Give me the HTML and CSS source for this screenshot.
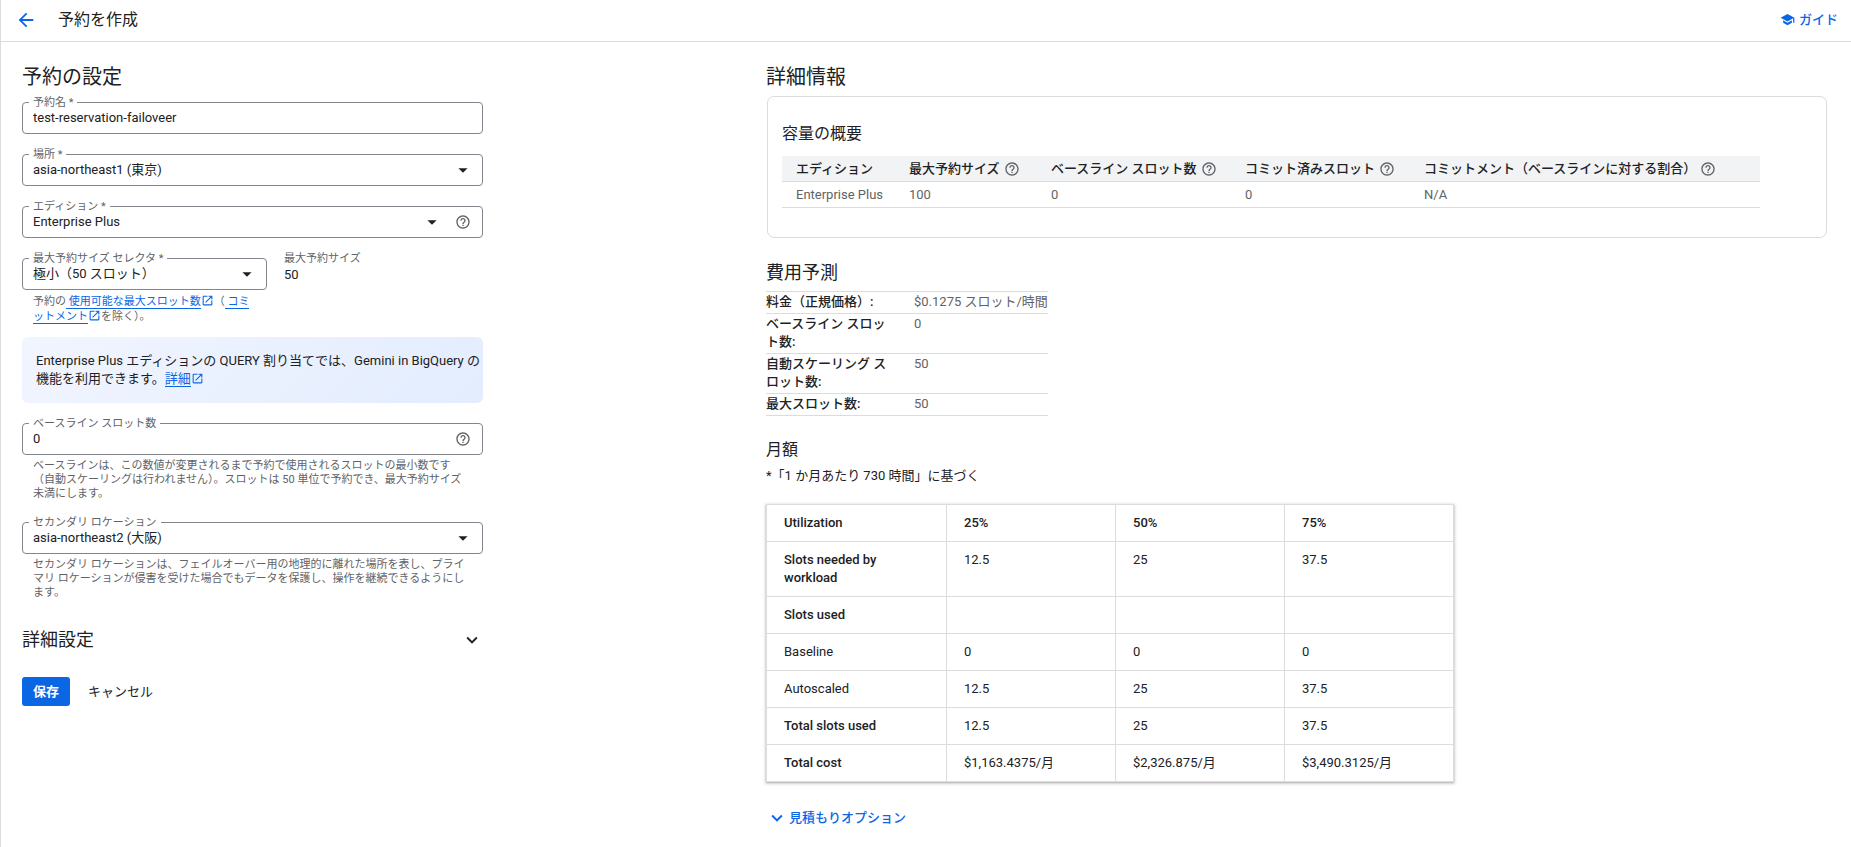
FILE: index.html
```
<!DOCTYPE html>
<html lang="ja">
<head>
    <meta charset="UTF-8">
    <meta name="viewport" content="width=device-width, initial-scale=1.0">
    <title>予約を作成</title>
    <link rel="stylesheet" href="styles.css">
</head>
<body>
    <!-- Shared icons -->
    <svg class="sprite" aria-hidden="true">
        <symbol id="icon-help" viewBox="0 0 24 24">
            <path d="M11 18h2v-2h-2v2zm1-16C6.48 2 2 6.48 2 12s4.48 10 10 10 10-4.48 10-10S17.52 2 12 2zm0 18c-4.41 0-8-3.59-8-8s3.59-8 8-8 8 3.59 8 8-3.59 8-8 8zm0-14c-2.21 0-4 1.79-4 4h2c0-1.1.9-2 2-2s2 .9 2 2c0 2-3 1.75-3 5h2c0-2.25 3-2.5 3-5 0-2.21-1.79-4-4-4z"/>
        </symbol>
        <symbol id="icon-open" viewBox="0 0 24 24">
            <path d="M19 19H5V5h7V3H5c-1.11 0-2 .9-2 2v14c0 1.1.89 2 2 2h14c1.1 0 2-.9 2-2v-7h-2v7zM14 3v2h3.59l-9.83 9.83 1.41 1.41L19 6.41V10h2V3h-7z"/>
        </symbol>
        <symbol id="icon-chevron" viewBox="0 0 24 24">
            <path d="M7.41 8.59 12 13.17l4.59-4.58L18 10l-6 6-6-6z"/>
        </symbol>
        <symbol id="icon-drop" viewBox="0 0 24 24">
            <path d="m7 10 5 5 5-5z"/>
        </symbol>
    </svg>

    <header>
        <button class="back" type="button" aria-label="戻る">
            <svg viewBox="0 0 24 24"><path d="M20 11H7.83l5.59-5.59L12 4l-8 8 8 8 1.41-1.41L7.83 13H20v-2z"/></svg>
        </button>
        <h1>予約を作成</h1>
        <a href="#" class="guide">
            <svg viewBox="0 0 24 24"><path d="M5 13.18v4L12 21l7-3.82v-4L12 17l-7-3.82zM12 3 1 9l11 6 9-4.91V17h2V9L12 3z"/></svg>
            ガイド
        </a>
    </header>

    <main>
        <form class="settings">
            <h2>予約の設定</h2>

            <div class="field">
                <label for="name">予約名 *</label>
                <input id="name" type="text" value="test-reservation-failoveer">
            </div>

            <div class="field">
                <label for="region">場所 *</label>
                <select id="region"><option>asia-northeast1 (東京)</option></select>
                <svg class="drop"><use href="#icon-drop"/></svg>
            </div>

            <div class="field">
                <label for="edition">エディション *</label>
                <select id="edition"><option>Enterprise Plus</option></select>
                <svg class="drop"><use href="#icon-drop"/></svg>
                <svg class="help"><use href="#icon-help"/></svg>
            </div>

            <div class="size-row">
                <div class="size-select">
                    <div class="field">
                        <label for="size">最大予約サイズ セレクタ *</label>
                        <select id="size"><option>極小（50 スロット）</option></select>
                        <svg class="drop"><use href="#icon-drop"/></svg>
                    </div>
                    <p class="hint">予約の<a href="#"> 使用可能な最大スロット数</a><svg class="open"><use href="#icon-open"/></svg>（<a href="#"> コミ<br>ットメント</a><svg class="open"><use href="#icon-open"/></svg>を除く）。</p>
                </div>
                <div class="size-value">
                    <span class="caption">最大予約サイズ</span>
                    <span>50</span>
                </div>
            </div>

            <p class="notice">Enterprise Plus エディションの QUERY 割り当てでは、Gemini in BigQuery の<br>機能を利用できます。<a href="#">詳細</a><svg class="open"><use href="#icon-open"/></svg></p>

            <div class="field">
                <label for="baseline">ベースライン スロット数</label>
                <input id="baseline" type="text" value="0">
                <svg class="help"><use href="#icon-help"/></svg>
            </div>
            <p class="hint">ベースラインは、この数値が変更されるまで予約で使用されるスロットの最小数です<br>（自動スケーリングは行われません）。スロットは 50 単位で予約でき、最大予約サイズ<br>未満にします。</p>

            <div class="field secondary">
                <label for="secondary">セカンダリ ロケーション</label>
                <select id="secondary"><option>asia-northeast2 (大阪)</option></select>
                <svg class="drop"><use href="#icon-drop"/></svg>
            </div>
            <p class="hint">セカンダリ ロケーションは、フェイルオーバー用の地理的に離れた場所を表し、プライ<br>マリ ロケーションが侵害を受けた場合でもデータを保護し、操作を継続できるようにし<br>ます。</p>

            <button class="advanced" type="button">
                詳細設定
                <svg><use href="#icon-chevron"/></svg>
            </button>

            <div class="actions">
                <button class="save" type="submit">保存</button>
                <button class="cancel" type="button">キャンセル</button>
            </div>
        </form>

        <section class="details">
            <h2>詳細情報</h2>

            <div class="card">
                <h3>容量の概要</h3>
                <table class="capacity">
                    <thead>
                        <tr>
                            <th class="col-edition">エディション</th>
                            <th class="col-max"><span>最大予約サイズ<svg class="help"><use href="#icon-help"/></svg></span></th>
                            <th class="col-baseline"><span>ベースライン スロット数<svg class="help"><use href="#icon-help"/></svg></span></th>
                            <th class="col-committed"><span>コミット済みスロット<svg class="help"><use href="#icon-help"/></svg></span></th>
                            <th><span>コミットメント（ベースラインに対する割合）<svg class="help"><use href="#icon-help"/></svg></span></th>
                        </tr>
                    </thead>
                    <tbody>
                        <tr>
                            <td>Enterprise Plus</td>
                            <td>100</td>
                            <td>0</td>
                            <td>0</td>
                            <td>N/A</td>
                        </tr>
                    </tbody>
                </table>
            </div>

            <h3 class="cost-title">費用予測</h3>
            <table class="cost">
                <tr><th>料金（正規価格）:</th><td>$0.1275 スロット/時間</td></tr>
                <tr><th>ベースライン スロッ<br>ト数:</th><td>0</td></tr>
                <tr><th>自動スケーリング ス<br>ロット数:</th><td>50</td></tr>
                <tr><th>最大スロット数:</th><td>50</td></tr>
            </table>

            <h3 class="monthly-title">月額</h3>
            <p class="note">*「1 か月あたり 730 時間」に基づく</p>

            <table class="monthly">
                <thead>
                    <tr><th>Utilization</th><th>25%</th><th>50%</th><th>75%</th></tr>
                </thead>
                <tbody>
                    <tr><th>Slots needed by workload</th><td>12.5</td><td>25</td><td>37.5</td></tr>
                    <tr><th>Slots used</th><td></td><td></td><td></td></tr>
                    <tr><td>Baseline</td><td>0</td><td>0</td><td>0</td></tr>
                    <tr><td>Autoscaled</td><td>12.5</td><td>25</td><td>37.5</td></tr>
                    <tr><th>Total slots used</th><td>12.5</td><td>25</td><td>37.5</td></tr>
                    <tr><th>Total cost</th><td>$1,163.4375/月</td><td>$2,326.875/月</td><td>$3,490.3125/月</td></tr>
                </tbody>
            </table>

            <button class="options" type="button">
                <svg><use href="#icon-chevron"/></svg>
                見積もりオプション
            </button>
        </section>
    </main>
</body>
</html>
```

FILE: styles.css
```
* { box-sizing: border-box; }

body {
    margin: 0;
    min-height: 100vh;
    border-left: 1px solid #dadce0;
    background: #fff;
    color: #202124;
    font-family: Roboto, "Noto Sans CJK JP", sans-serif;
    font-size: 13px;
    line-height: 18px;
}

h1, h2, h3, p { margin: 0; font-weight: 400; }
h1 { font-size: 16px; }
h2 { font-size: 20px; line-height: 28px; }
a { color: #0b66e4; text-decoration: none; }
svg { fill: currentColor; flex: none; }
button, input, select { font: inherit; color: inherit; }
button { padding: 0; border: none; background: none; cursor: pointer; }
table { border-collapse: collapse; }
th { text-align: left; font-weight: 500; }

.sprite { display: none; }

/* Top bar */
header {
    display: flex;
    align-items: center;
    height: 42px;
    padding: 0 13px 2px 14px;
    border-bottom: 1px solid #dadce0;
}
.back { display: flex; color: #0b66e4; }
.back svg { width: 22px; height: 22px; }
header h1 { margin-left: 21px; }
.guide {
    display: flex;
    align-items: center;
    gap: 4px;
    margin-left: auto;
    font-weight: 500;
}
.guide svg { width: 15px; height: 15px; }

main {
    display: grid;
    grid-template-columns: 461px minmax(0, 1fr);
    column-gap: 283px;
    padding: 21px 24px 20px 21px;
}

/* Form fields */
.settings h2 { margin-bottom: 11px; }
.field {
    position: relative;
    display: flex;
    align-items: center;
    height: 32px;
    margin-bottom: 20px;
    border: 1px solid #80868b;
    border-radius: 4px;
}
.field label {
    position: absolute;
    top: -8px;
    left: 6px;
    padding: 0 4px;
    background: #fff;
    color: #5f6368;
    font-size: 11px;
    line-height: 16px;
}
.field input,
.field select {
    flex: 1;
    min-width: 0;
    height: 100%;
    padding: 0 0 1px 10px;
    border: none;
    outline: none;
    background: none;
    appearance: none;
}
.drop { width: 22px; height: 22px; margin-right: 8px; pointer-events: none; }
.drop:has(+ .help) { margin-right: 12px; }
.help { width: 16px; height: 16px; color: #5f6368; }
.field .help { margin-right: 11px; }
.hint {
    padding: 0 11px;
    color: #5f6368;
    font-size: 11px;
    line-height: 14px;
    white-space: nowrap;
}
.hint a, .notice a { border-bottom: 1px solid #0b66e4; }
.open {
    width: 13px;
    height: 13px;
    color: #0b66e4;
    vertical-align: -2px;
}

.size-row { display: flex; gap: 17px; }
.size-select { width: 245px; }
.size-select .field { margin-bottom: 4px; }
.size-select .hint { line-height: 15px; }
.size-value { display: flex; flex-direction: column; }
.caption { margin: -8px 0 -2px; color: #5f6368; font-size: 11px; }

.notice {
    margin: 13px 0 20px;
    padding: 15px 0 15px 14px;
    border-radius: 6px;
    background: linear-gradient(135deg, #f1f5fe, #e3edfe);
    white-space: nowrap;
}

.field:has(+ .hint) { margin-bottom: 4px; }
.secondary { margin-top: 21px; }

.advanced {
    display: flex;
    align-items: center;
    justify-content: space-between;
    width: 100%;
    margin-top: 27px;
    font-size: 18px;
    line-height: 26px;
}
.advanced svg { width: 22px; height: 22px; }

.actions { display: flex; align-items: center; gap: 18px; margin-top: 24px; }
.save {
    height: 29px;
    padding: 0 11px;
    border-radius: 3px;
    background: #0b66e4;
    color: #fff;
    font-weight: 700;
}

/* Details column */
.card {
    margin: 5px 0 0 1px;
    padding: 26px 14px 29px;
    border: 1px solid #dadce0;
    border-radius: 7px;
}
.card h3 { margin-bottom: 11px; font-size: 16px; line-height: 22px; }
.capacity { width: 978px; max-width: 100%; table-layout: fixed; }
.capacity th, .capacity td {
    padding: 4px 0 3px 14px;
    border-bottom: 1px solid #dadce0;
    white-space: nowrap;
}
.capacity th { background: #f1f3f4; }
.capacity td { color: #5f6368; }
.capacity span { display: flex; align-items: center; gap: 4px; }
.col-edition { width: 113px; }
.col-max { width: 142px; }
.col-baseline { width: 194px; }
.col-committed { width: 179px; }

.cost-title { margin: 22px 0 5px; font-size: 18px; line-height: 26px; }
.cost { border-top: 1px solid #dadce0; }
.cost th, .cost td {
    padding: 1px 0 2px;
    border-bottom: 1px solid #dadce0;
    vertical-align: top;
}
.cost th { width: 148px; }
.cost td { color: #5f6368; }

.monthly-title { margin-top: 23px; font-size: 16px; line-height: 22px; }
.note { margin: 6px 0 19px; }
.monthly {
    width: 688px;
    table-layout: fixed;
    box-shadow: 0 1px 2px rgba(60, 64, 67, .3), 0 1px 3px 1px rgba(60, 64, 67, .15);
}
.monthly th, .monthly td {
    height: 37px;
    padding: 9px 17px;
    border: 1px solid #dadce0;
    vertical-align: top;
}
.monthly tr :first-child { width: 180px; padding-right: 50px; }

.options {
    display: flex;
    align-items: center;
    gap: 1px;
    margin-top: 25px;
    color: #0b66e4;
    font-weight: 500;
}
.options svg { width: 22px; height: 22px; }
```
